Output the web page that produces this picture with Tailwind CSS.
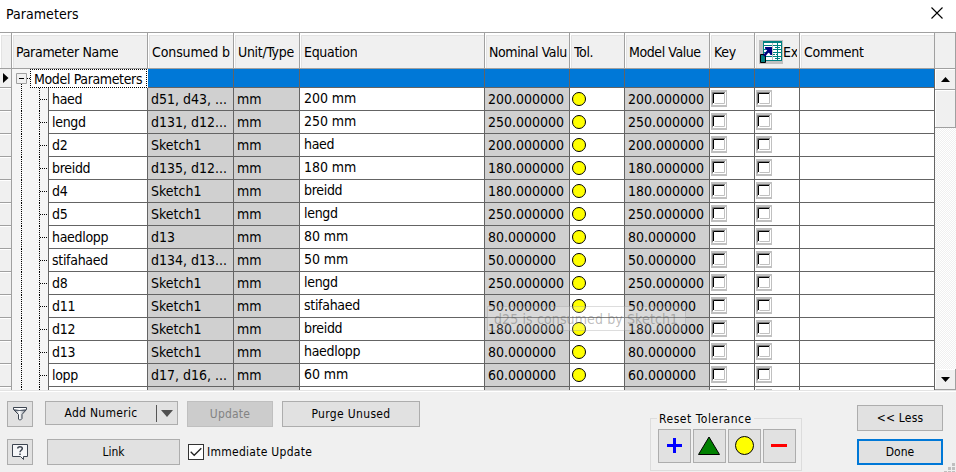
<!DOCTYPE html>
<html lang="en">
<head>
<meta charset="utf-8">
<title>Parameters</title>
<script src="https://cdn.jsdelivr.net/npm/@tailwindcss/browser@4"></script>
</head>
<body class="w-[956px] h-[472px] overflow-hidden bg-[#f0f0f0] text-black font-['DejaVu_Sans_Condensed','DejaVu_Sans',sans-serif] text-[14px] leading-[18px] whitespace-nowrap">
<div class="relative flex flex-col w-[956px] h-[472px]">
  <header class="flex h-8 shrink-0 justify-between bg-white pl-1.5 pr-[13px] pt-[5px]">
    <h1 class="tracking-[0.05px]">Parameters</h1>
    <svg class="mt-[2px]" width="12" height="12" viewBox="0 0 12 12" stroke="#000" stroke-width="1.1"><path d="M0.5 0.5L11.5 11.5M11.5 0.5L0.5 11.5"/></svg>
  </header>

  <main class="flex h-[358px] shrink-0 overflow-hidden border-t border-[#a0a0a0] bg-white">
    <div class="w-[935px] shrink-0">
      <div id="head" class="grid h-9 grid-cols-[12px_136px_86px_66px_185px_85px_55px_85px_45px_45px_135px] border-b border-[#a0a0a0] bg-[#f0f0f0]"></div>
      <div class="grid h-[19px] grid-cols-[12px_36px_100px_86px_66px_185px_85px_55px_85px_45px_45px_135px]">
        <div class="flex items-center border-r border-b border-[#a0a0a0] bg-[#f0f0f0] pl-[3px]"><svg width="6" height="10" viewBox="0 0 6 10"><path d="M0 0L5.5 5L0 10z"/></svg></div>
        <div class="bg-[#f5f5f5] pl-1 pt-[4px]"><svg width="32" height="15" viewBox="0 0 32 15"><path d="M5.5 11V15" stroke="#000" stroke-dasharray="1 1"/><path d="M11 5.500H14" stroke="#000" stroke-dasharray="1 1"/><path d="M0.500 0.500H10.500V10.500H0.500z" fill="#f0f0f0" stroke="#a0a0a0"/><path d="M3 5.500H8" stroke="#000"/></svg></div>
        <div class="relative z-10 -ml-[18px] h-[19px] w-[117px] border border-dotted border-black bg-white pl-[3px] tracking-[-0.36px]">Model Parameters</div>
        <div class="border-r border-b border-[#646464] bg-[#0078d7]"></div>
        <div class="border-r border-b border-[#646464] bg-[#0078d7]"></div>
        <div class="border-r border-b border-[#646464] bg-[#0078d7]"></div>
        <div class="border-r border-b border-[#646464] bg-[#0078d7]"></div>
        <div class="border-r border-b border-[#646464] bg-[#0078d7]"></div>
        <div class="border-r border-b border-[#646464] bg-[#0078d7]"></div>
        <div class="border-r border-b border-[#646464] bg-[#0078d7]"></div>
        <div class="border-r border-b border-[#646464] bg-[#0078d7]"></div>
        <div class="border-r border-b border-[#646464] bg-[#0078d7]"></div>
      </div>
      <div id="rows"></div>
    </div>
    <div class="flex w-[21px] shrink-0 flex-col">
      <div class="h-9 shrink-0 border-r border-b border-[#a0a0a0] bg-[#f0f0f0]"></div>
      <div class="flex h-[21px] shrink-0 items-center justify-center border-r border-b border-[#a0a0a0] bg-[#f0f0f0] shadow-[inset_1px_1px_0_#fff]"><svg width="9" height="5" viewBox="0 0 9 5"><path d="M4.500 0L9 5H0z"/></svg></div>
      <div class="h-[38px] shrink-0 border-r border-b border-[#a0a0a0] bg-[#f0f0f0] shadow-[inset_1px_1px_0_#fff]"></div>
      <div class="h-[241px] shrink-0 bg-[#f8f8f8] bg-[conic-gradient(#fff_25%,#f0f0f0_0_50%,#fff_0_75%,#f0f0f0_0)] bg-[size:2px_2px]"></div>
      <div class="flex h-[21px] shrink-0 items-center justify-center border-r border-b border-[#a0a0a0] bg-[#f0f0f0] shadow-[inset_1px_1px_0_#fff]"><svg width="9" height="5" viewBox="0 0 9 5"><path d="M0 0H9L4.500 5z"/></svg></div>
    </div>
  </main>

  <footer class="flex h-[82px] border-t border-[#e3e3e3] text-[12px] leading-[16px] shadow-[inset_0_1px_0_#fff]">
    <div class="flex w-[650px] shrink-0 flex-col gap-3 pl-[7px] pt-[10px]">
      <div class="flex h-[26px]">
        <button class="flex size-[26px] items-center justify-center border border-[#adadad] bg-[#e1e1e1]"><svg width="16" height="16" viewBox="0 0 16 16"><defs><linearGradient id="metal"><stop offset="0" stop-color="#5c6572"/><stop offset=".45" stop-color="#fff"/><stop offset="1" stop-color="#6b7480"/></linearGradient></defs><path d="M1.500 1.500H14.500V3.500L10 8.500V12.500L8.500 14H7.500L6.500 13V8.500L1.500 3.500z" fill="url(#metal)" stroke="#3c4450"/><path d="M2 2.500H14" stroke="#fff"/><path d="M3 4.500H13" stroke="#5c6572"/></svg></button>
        <button class="ml-3 flex h-6 w-[133px] items-center border border-[#adadad] bg-[#e1e1e1]"><span class="w-[110px] text-center tracking-[0.3px]">Add Numeric</span><span class="h-[17px] w-px bg-[#555]"></span><svg class="ml-1" width="12" height="7" viewBox="0 0 12 7"><path d="M0 0H12L6 7z" fill="#505050"/></svg></button>
        <button class="ml-[9px] h-[26px] w-[86px] border border-[#bfbfbf] bg-[#ccc] tracking-[0.2px] text-[#838383]">Update</button>
        <button class="ml-[9px] h-[26px] w-[138px] border border-[#adadad] bg-[#e1e1e1] tracking-[0.34px]">Purge Unused</button>
      </div>
      <div class="flex h-[26px] items-center">
        <button class="flex size-[26px] items-center justify-center border border-[#adadad] bg-[#e1e1e1]"><svg width="16" height="16" viewBox="0 0 16 16" fill="none"><path d="M0.500 0.500H15.500V12.500H11.500V15.500L8.500 12.500H0.500z" fill="#f5f6f8" stroke="#3c4450"/><path d="M5.700 4.500C5.700 2 10.300 2 10.300 4.500C10.300 6.300 8 6.200 8 8.300M8 9.500V11" stroke="#3c4450" stroke-width="1.500"/></svg></button>
        <button class="ml-[14px] h-[26px] w-[133px] border border-[#adadad] bg-[#e1e1e1]">Link</button>
        <span class="ml-2 flex size-4 items-center justify-center border border-[#333] bg-white"><svg width="12" height="10" viewBox="0 0 12 10" fill="none"><path d="M0.700 4.800L4.200 8.300L11.300 1.200" stroke="#222" stroke-width="1.300"/></svg></span>
        <span class="ml-[3px] tracking-[0.27px]">Immediate Update</span>
      </div>
    </div>
    <div class="mt-[19px] flex h-[62px] w-[152px] shrink-0 flex-col">
      <div class="relative mt-[8px] h-[53px] border border-[#dcdcdc] pl-[7px] pt-[10px]">
        <span class="absolute -top-[8px] left-[6px] bg-[#f0f0f0] px-0.5 tracking-[0.53px]">Reset Tolerance</span>
        <div class="flex gap-0.5">
          <button class="flex h-[34px] w-[33px] items-center justify-center border border-[#adadad] bg-[#e1e1e1] pr-px pb-px"><svg width="15" height="15" viewBox="0 0 15 15"><path d="M6 0H9V6H15V9H9V15H6V9H0V6H6z" fill="#00f"/></svg></button>
          <button class="flex h-[34px] w-[33px] items-center justify-center border border-[#adadad] bg-[#e1e1e1] pr-px pb-px"><svg width="24" height="20" viewBox="0 0 24 20"><path d="M12 1L22.500 18.500H1.500z" fill="#008000" stroke="#000"/></svg></button>
          <button class="flex h-[34px] w-[33px] items-center justify-center border border-[#adadad] bg-[#e1e1e1] pr-px pb-px"><svg width="19" height="19" viewBox="0 0 19 19"><circle cx="9.500" cy="9.500" r="9" fill="#ff0" stroke="#000"/></svg></button>
          <button class="flex h-[34px] w-[33px] items-center justify-center border border-[#adadad] bg-[#e1e1e1] pr-px pb-px"><span class="h-[3px] w-4 bg-[#f00]"></span></button>
        </div>
      </div>
    </div>
    <div class="ml-[55px] flex w-[86px] shrink-0 flex-col gap-2 pt-[14px]">
      <button class="h-[26px] border border-[#adadad] bg-[#e1e1e1] tracking-[0.2px]">&lt;&lt; Less</button>
      <button class="h-[26px] border-2 border-[#0078d7] bg-[#e1e1e1]">Done</button>
    </div>
    <svg class="ml-[1px] mt-[72px]" width="12" height="10" viewBox="0 0 12 10" fill="#bfbfbf"><path d="M8 0h3v3h-3zM4 4h3v3h-3zM8 4h3v3h-3zM0 8h3v2h-3zM4 8h3v2h-3zM8 8h3v2h-3z"/></svg>
  </footer>

  <div class="absolute left-[487px] top-[306px] h-[25px] w-[199px] border border-[#767676]/25 bg-white/20 pl-[6px] pt-[3px] text-[14px] text-[#575757]/40 tracking-[0.12px]">d25 is consumed by Sketch1</div>
</div>
<script>
const exportIcon = `<svg class="shrink-0" width="24" height="24" viewBox="0 0 24 24"><path d="M0 0H24V24H0z" fill="#c0c0c0"/><path d="M4 1H23V21H4z" fill="#008080"/><path d="M5 3H22V20H5z" fill="#fff"/><path d="M5 5.500H22M5 9.500H22M5 12.500H22M5 16.500H22M18.500 3V20" stroke="#008080"/><path d="M13.500 3V20" stroke="#c0c0c0"/><path d="M16 7.500H21M14 14.500H18M16 18.500H21" stroke="#008080" stroke-dasharray="2 1"/><path d="M1.500 14.500H6.500V22.500H1.500z" fill="#008080" stroke="#000"/><path d="M5 16L10 10" stroke="#000080" stroke-width="2.500"/><path d="M6 7H13V15H11.500L10 12.500L8 10L6 8.500z" fill="#000080"/></svg>`;
const headers = ["", "Parameter Name", "Consumed b", "Unit/Type", "Equation", "Nominal Valu", "Tol.", "Model Value", "Key", exportIcon + "Ex", "Comment"];
document.getElementById("head").innerHTML = headers.map((h, i) => {
  const tracking = i === 2 ? "tracking-[-0.12px]" : i === 5 || i === 7 ? "tracking-[-0.42px]" : "tracking-[-0.3px]";
  return `<div class="flex items-center overflow-hidden border-r border-[#a0a0a0] pt-[2px] pl-[4px] pr-[2px] ${tracking} shadow-[inset_1px_2px_0_#fff,inset_2px_3px_0_#e3e3e3]"><div class="flex items-center overflow-hidden">${h}</div></div>`;
}).join("");

const data = [
  ["haed", "d51, d43, ...", "200 mm", "200"],
  ["lengd", "d131, d12...", "250 mm", "250"],
  ["d2", "Sketch1", "haed", "200"],
  ["breidd", "d135, d12...", "180 mm", "180"],
  ["d4", "Sketch1", "breidd", "180"],
  ["d5", "Sketch1", "lengd", "250"],
  ["haedlopp", "d13", "80 mm", "80"],
  ["stifahaed", "d134, d13...", "50 mm", "50"],
  ["d8", "Sketch1", "lengd", "250"],
  ["d11", "Sketch1", "stifahaed", "50"],
  ["d12", "Sketch1", "breidd", "180"],
  ["d13", "Sketch1", "haedlopp", "80"],
  ["lopp", "d17, d16, ...", "60 mm", "60"],
  ["", "", "", ""],
];
const tree = `<svg width="36" height="23" viewBox="0 0 36 23" stroke="#000"><path d="M9.500 0V23M27.500 0V23" stroke-dasharray="1 1"/><path d="M28 11.500H36" stroke-dasharray="1 1"/></svg>`;
const box = `<svg width="16" height="17" viewBox="0 0 16 17" fill="none"><path d="M0 0H16V17H0z" fill="#c0c0c0"/><path d="M2 2H15V15H2z" fill="#fff"/><path d="M1.500 14V2.500H14" stroke="#808080"/><path d="M2.500 13V3.500H13" stroke="#000"/><path d="M3.500 13.500H13.500V3" stroke="#c0c0c0"/></svg>`;
const dot = `<svg width="14" height="14" viewBox="0 0 14 14"><circle cx="7" cy="7" r="6.500" fill="#ff0" stroke="#000"/></svg>`;
document.getElementById("rows").innerHTML = data.map(([name, used, eq, val]) => {
  const num = val && val + ".000000";
  const grey = "border-r border-b border-[#646464] bg-[#d0d0d0] pl-[3px] pt-[2px]";
  const white = "border-r border-b border-[#646464] bg-white";
  const eqTracking = eq.endsWith(" mm") ? "tracking-[-0.05px]" : "tracking-[-0.3px]";
  return `<div class="grid h-[23px] grid-cols-[12px_36px_100px_86px_66px_185px_85px_55px_85px_45px_45px_135px]">
    <div class="border-r border-b border-[#a0a0a0] bg-[#f0f0f0] shadow-[inset_0_1px_0_#fff]"></div>
    <div class="bg-[#f5f5f5]">${tree}</div>
    <div class="border-l ${white} pl-[3px] pt-[2px] tracking-[-0.3px]">${name}</div>
    <div class="${grey}">${used}</div>
    <div class="${grey}">${name && "mm"}</div>
    <div class="${white} pl-1 pt-px ${eqTracking}">${eq}</div>
    <div class="${grey}">${num}</div>
    <div class="${white} pl-[2px] pt-[4px]">${name && dot}</div>
    <div class="${grey}">${num}</div>
    <div class="${white} pl-px pt-[2px]">${box}</div>
    <div class="${white} pl-px pt-[2px]">${box}</div>
    <div class="${white}"></div>
  </div>`;
}).join("");
</script>
</body>
</html>
